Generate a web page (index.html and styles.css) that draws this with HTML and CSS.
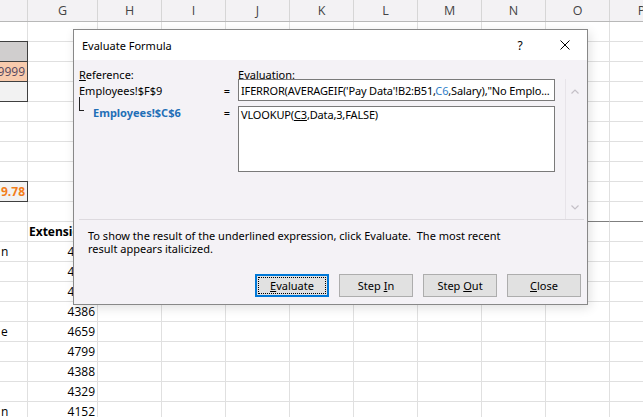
FILE: index.html
```html
<!DOCTYPE html>
<html lang="en">
<head>
<meta charset="utf-8">
<title>Evaluate Formula</title>
<link rel="stylesheet" href="styles.css">
</head>
<body>
<div class="sheet">
  <div class="hdr"><span class="c"></span><span class="c">G</span><span class="c">H</span><span class="c">I</span><span class="c">J</span><span class="c">K</span><span class="c">L</span><span class="c">M</span><span class="c">N</span><span class="c">O</span><span class="c">P</span></div>
  <div class="row"><span class="c"></span><span class="c"></span><span class="c"></span><span class="c"></span><span class="c"></span><span class="c"></span><span class="c"></span><span class="c"></span><span class="c"></span><span class="c"></span><span class="c"></span></div>
  <div class="row"><span class="c boxed box-hd"></span><span class="c"></span><span class="c"></span><span class="c"></span><span class="c"></span><span class="c"></span><span class="c"></span><span class="c"></span><span class="c"></span><span class="c"></span><span class="c"></span></div>
  <div class="row"><span class="c boxed box-in num">99999</span><span class="c"></span><span class="c"></span><span class="c"></span><span class="c"></span><span class="c"></span><span class="c"></span><span class="c"></span><span class="c"></span><span class="c"></span><span class="c"></span></div>
  <div class="row"><span class="c boxed box-out"></span><span class="c"></span><span class="c"></span><span class="c"></span><span class="c"></span><span class="c"></span><span class="c"></span><span class="c"></span><span class="c"></span><span class="c"></span><span class="c"></span></div>
  <div class="row"><span class="c"></span><span class="c"></span><span class="c"></span><span class="c"></span><span class="c"></span><span class="c"></span><span class="c"></span><span class="c"></span><span class="c"></span><span class="c"></span><span class="c"></span></div>
  <div class="row"><span class="c"></span><span class="c"></span><span class="c"></span><span class="c"></span><span class="c"></span><span class="c"></span><span class="c"></span><span class="c"></span><span class="c"></span><span class="c"></span><span class="c"></span></div>
  <div class="row"><span class="c"></span><span class="c"></span><span class="c"></span><span class="c"></span><span class="c"></span><span class="c"></span><span class="c"></span><span class="c"></span><span class="c"></span><span class="c"></span><span class="c"></span></div>
  <div class="row"><span class="c"></span><span class="c"></span><span class="c"></span><span class="c"></span><span class="c"></span><span class="c"></span><span class="c"></span><span class="c"></span><span class="c"></span><span class="c"></span><span class="c"></span></div>
  <div class="row"><span class="c boxed box-calc num">$2,519.78</span><span class="c"></span><span class="c"></span><span class="c"></span><span class="c"></span><span class="c"></span><span class="c"></span><span class="c"></span><span class="c"></span><span class="c"></span><span class="c"></span></div>
  <div class="row rule"><span class="c"></span><span class="c"></span><span class="c"></span><span class="c"></span><span class="c"></span><span class="c"></span><span class="c"></span><span class="c"></span><span class="c"></span><span class="c"></span><span class="c"></span></div>
  <div class="row"><span class="c"></span><span class="c b txt">Extension</span><span class="c"></span><span class="c"></span><span class="c"></span><span class="c"></span><span class="c"></span><span class="c"></span><span class="c"></span><span class="c"></span><span class="c"></span></div>
  <div class="row"><span class="c txt">n</span><span class="c num">4281</span><span class="c"></span><span class="c"></span><span class="c"></span><span class="c"></span><span class="c"></span><span class="c"></span><span class="c"></span><span class="c"></span><span class="c"></span></div>
  <div class="row"><span class="c"></span><span class="c num">4312</span><span class="c"></span><span class="c"></span><span class="c"></span><span class="c"></span><span class="c"></span><span class="c"></span><span class="c"></span><span class="c"></span><span class="c"></span></div>
  <div class="row"><span class="c"></span><span class="c num">4478</span><span class="c"></span><span class="c"></span><span class="c"></span><span class="c"></span><span class="c"></span><span class="c"></span><span class="c"></span><span class="c"></span><span class="c"></span></div>
  <div class="row"><span class="c"></span><span class="c num">4386</span><span class="c"></span><span class="c"></span><span class="c"></span><span class="c"></span><span class="c"></span><span class="c"></span><span class="c"></span><span class="c"></span><span class="c"></span></div>
  <div class="row"><span class="c txt">e</span><span class="c num">4659</span><span class="c"></span><span class="c"></span><span class="c"></span><span class="c"></span><span class="c"></span><span class="c"></span><span class="c"></span><span class="c"></span><span class="c"></span></div>
  <div class="row"><span class="c"></span><span class="c num">4799</span><span class="c"></span><span class="c"></span><span class="c"></span><span class="c"></span><span class="c"></span><span class="c"></span><span class="c"></span><span class="c"></span><span class="c"></span></div>
  <div class="row"><span class="c"></span><span class="c num">4388</span><span class="c"></span><span class="c"></span><span class="c"></span><span class="c"></span><span class="c"></span><span class="c"></span><span class="c"></span><span class="c"></span><span class="c"></span></div>
  <div class="row"><span class="c"></span><span class="c num">4329</span><span class="c"></span><span class="c"></span><span class="c"></span><span class="c"></span><span class="c"></span><span class="c"></span><span class="c"></span><span class="c"></span><span class="c"></span></div>
  <div class="row"><span class="c txt">n</span><span class="c num">4152</span><span class="c"></span><span class="c"></span><span class="c"></span><span class="c"></span><span class="c"></span><span class="c"></span><span class="c"></span><span class="c"></span><span class="c"></span></div>
</div>

<div class="dlg">
  <div class="title">
    <span class="ttl">Evaluate Formula</span>
    <span class="help">?</span>
    <span class="close"><svg width="10" height="10" viewBox="0 0 10 10"><path d="M0.5 0.5L9.5 9.5M9.5 0.5L0.5 9.5" stroke="#000" stroke-width="1" fill="none"/></svg></span>
  </div>
  <div class="labels"><span><u>R</u>eference:</span><span>E<u>v</u>aluation:</span></div>
  <div class="panel">
    <div class="evals">
      <div class="ref">Employees!$F$9</div>
      <div class="eq">=</div>
      <div class="box"><span>IFERROR(AVERAGEIF('Pay Data'!B2:B51,<span class="blue">C6</span>,Salary),"No Emplo...</span></div>
      <div class="ref sub"><span class="tree"></span><span class="subref">Employees!$C$6</span></div>
      <div class="eq top">=</div>
      <div class="box tall"><span>VLOOKUP(<u>C3</u>,Data,3,FALSE)</span></div>
    </div>
    <div class="scroll">
      <span class="arrow"><svg width="8" height="5" viewBox="0 0 8 5"><path d="M0.5 4.5L4 1L7.5 4.5" stroke="#c4c0c7" stroke-width="1.2" fill="none"/></svg></span>
      <span class="arrow"><svg width="8" height="5" viewBox="0 0 8 5"><path d="M0.5 0.5L4 4L7.5 0.5" stroke="#c4c0c7" stroke-width="1.2" fill="none"/></svg></span>
    </div>
  </div>
  <p class="hint">To show the result of the underlined expression, click Evaluate.&nbsp; The most recent<br>result appears italicized.</p>
  <div class="btns">
    <button class="btn def"><span><u>E</u>valuate</span></button>
    <button class="btn"><span>Step <u>I</u>n</span></button>
    <button class="btn"><span>Step <u>O</u>ut</span></button>
    <button class="btn"><span><u>C</u>lose</span></button>
  </div>
</div>
</body>
</html>
```

FILE: styles.css
```css
* { box-sizing: border-box; margin: 0; padding: 0; }
html, body { width: 643px; height: 417px; }
body {
  position: relative;
  overflow: hidden;
  background: #fff;
  font-family: "Open Sans", "Noto Sans", sans-serif;
}

/* ---------- spreadsheet ---------- */
.sheet { width: 643px; height: 417px; overflow: hidden; }
.hdr, .row { display: flex; width: max-content; }
.hdr { height: 22px; background: #f3f2f4; border-bottom: 1px solid #b8b8b8; }
.row { height: 20px; }
.c {
  flex: 0 0 64px;
  height: 100%;
  display: flex;
  align-items: center;
  padding: 0 2px;
  border-right: 1px solid #e0e0e0;
  border-bottom: 1px solid #e0e0e0;
  overflow: hidden;
  white-space: nowrap;
  font-size: 12px;
  color: #000;
}
.c:first-child { flex-basis: 28px; }
.c:nth-child(2) { flex-basis: 70px; }
.hdr .c {
  border-bottom: 0;
  border-right-color: #d6d6d6;
  justify-content: center;
  color: #444;
  font-size: 12.5px;
}
.num { justify-content: flex-end; }
.txt { padding-left: 1px; }
.b { font-weight: 700; }
.rule .c:nth-child(n+3) { border-bottom-color: #7f7f7f; }

.boxed {
  border-right-color: #3f3f3f;
  border-bottom-color: #3f3f3f;
  box-shadow: 0 -1px 0 #3f3f3f;
}
.box-hd { background: #d0cece; }
.box-in { background: #f8cbad; color: #54475e; }
.box-out { background: #f2f2f2; }
.box-calc { background: #f2f2f2; color: #f27d1a; font-weight: 700; }

/* ---------- dialog ---------- */
.dlg {
  position: absolute;
  left: 73px;
  top: 29px;
  width: 515px;
  height: 276px;
  border: 1px solid #888;
  background: #f4f2f6;
  font-family: "Noto Sans", "Open Sans", sans-serif;
  font-size: 11px;
  color: #000;
  display: flex;
  flex-direction: column;
  box-shadow: 2px 3px 10px rgba(0, 0, 0, 0.12);
}
.title {
  flex: none;
  height: 30px;
  background: #fff;
  display: flex;
  align-items: center;
  padding-left: 8px;
}
.ttl { flex: 1; }
.help { width: 46px; text-align: center; font-size: 12px; }
.close { width: 44px; display: flex; justify-content: center; }

.labels {
  display: grid;
  grid-template-columns: 159px auto;
  height: 10px;
  line-height: 12px;
  margin: 9px 0 0 5px;
}
.panel {
  flex: none;
  display: flex;
  height: 141px;
  margin: 0 3px 0 5px;
  border-bottom: 1px solid #dddadf;
}
.evals {
  display: grid;
  grid-template-columns: 140px 19px 317px;
  grid-template-rows: 22px 66px;
  row-gap: 5px;
  align-content: start;
}
.ref { display: flex; align-items: center; white-space: nowrap; }
.eq { display: flex; align-items: center; justify-content: center; padding-right: 3px; }
.box {
  background: #fff;
  border: 1px solid #7a7a7a;
  padding: 0 2px;
  display: flex;
  align-items: center;
  white-space: nowrap;
  overflow: hidden;
  letter-spacing: -0.15px;
}
.box.tall { align-items: flex-start; padding-top: 1px; line-height: 14px; }
.ref.sub, .eq.top { align-items: flex-start; line-height: 14px; }
.tree {
  flex: none;
  width: 5px;
  height: 14px;
  margin-top: -9px;
  border-left: 1px solid #222;
  border-bottom: 1px solid #222;
}
.subref { margin-left: 9px; color: #1f6fb7; font-weight: 700; }
.blue { color: #2f80c8; }

.scroll {
  margin-left: auto;
  width: 19px;
  border-left: 1px solid #e7e4e9;
  display: flex;
  flex-direction: column;
  justify-content: space-between;
  align-items: center;
}
.arrow { height: 24px; display: flex; align-items: center; justify-content: center; }

.hint { margin: 9px 0 0 14px; line-height: 13px; white-space: nowrap; }

.btns {
  display: flex;
  justify-content: flex-end;
  gap: 10px;
  margin: 19px 6px 0 0;
}
.btn {
  width: 74px;
  height: 23px;
  padding: 0;
  background: #e1e1e1;
  border: 1px solid #adadad;
  font: inherit;
  color: #000;
  display: flex;
  align-items: center;
  justify-content: center;
}
.btn > span { white-space: nowrap; }
.btn.def { border: 2px solid #0078d7; padding: 1px; }
.btn.def > span {
  flex: 1;
  align-self: stretch;
  border: 1px dotted #000;
  display: flex;
  align-items: center;
  justify-content: center;
}
```
